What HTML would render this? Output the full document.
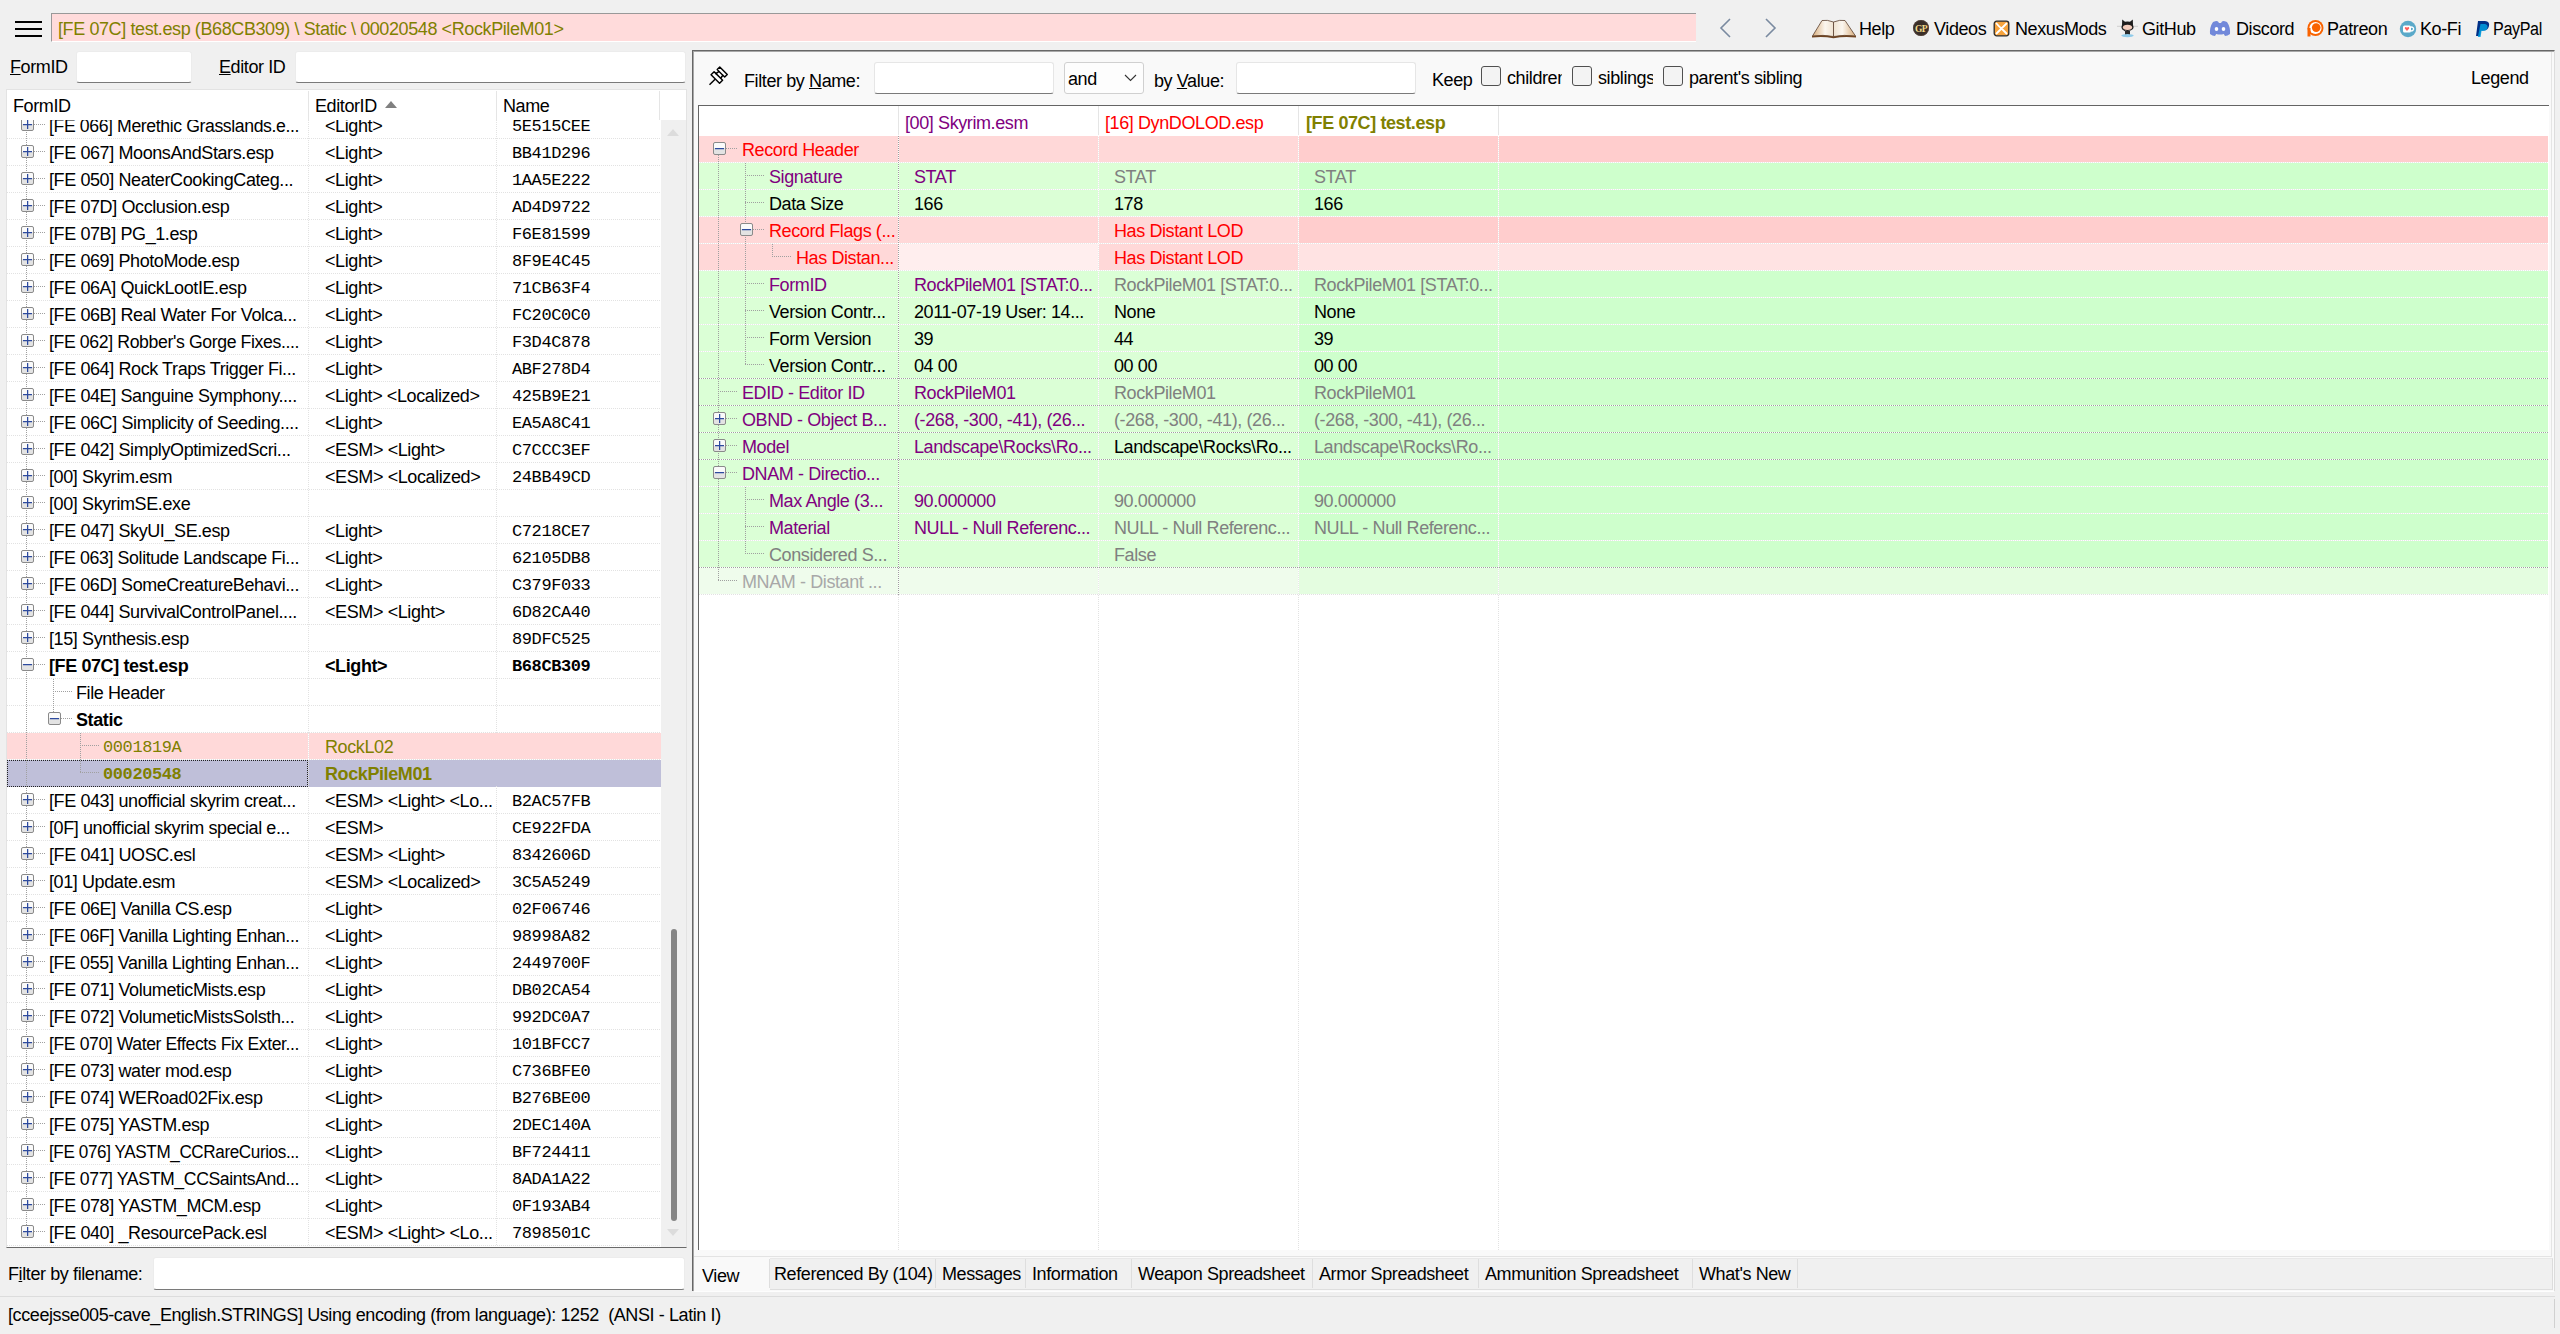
<!DOCTYPE html><html><head><meta charset="utf-8"><style>
*{box-sizing:border-box}
html,body{margin:0;padding:0}
body{width:2560px;height:1334px;overflow:hidden;background:#f0f0f0;position:relative;
 font-family:"Liberation Sans",sans-serif;font-size:18px;letter-spacing:-0.4px;color:#000}
.a{position:absolute;white-space:nowrap}
.t{position:absolute;white-space:nowrap;line-height:20px;height:20px}
.mono{font-family:"Liberation Mono",monospace;font-size:17px;letter-spacing:-0.4px}
.inp{position:absolute;background:#fff;border:1px solid #ececec;border-bottom:1px solid #7a7a7a;border-radius:3px}
.pb{position:absolute;width:13px;height:13px;border:1px solid #8a8a8a;border-radius:2px;
 background:linear-gradient(#fafafa 0,#fafafa 50%,#e3e3e3 50%,#e3e3e3 100%)}
.pb:before{content:"";position:absolute;left:1px;top:5px;width:9px;height:1px;background:#2d4a9e;box-shadow:0 1px 0 rgba(45,74,158,.25)}
.pb.p:after{content:"";position:absolute;left:5px;top:1px;width:1px;height:9px;background:#2d4a9e;box-shadow:1px 0 0 rgba(45,74,158,.25)}
.hd{position:absolute;height:1px;background-image:linear-gradient(90deg,#a0a0a0 50%,transparent 50%);background-size:2px 1px}
.vd{position:absolute;width:1px;background-image:linear-gradient(#a0a0a0 50%,transparent 50%);background-size:1px 2px}
.rs{position:absolute;height:1px;background:#e9e9e9 linear-gradient(90deg,#fff 50%,transparent 50%);background-size:2px 1px}
.ls{position:absolute;height:1px;background-image:linear-gradient(90deg,#e2e2e2 50%,transparent 50%);background-size:2px 1px}
.lv{position:absolute;width:1px;background-image:linear-gradient(#e2e2e2 50%,transparent 50%);background-size:1px 2px}
</style></head><body>
<div class="a" style="left:15px;top:21px;width:27px;height:2px;background:#000"></div>
<div class="a" style="left:15px;top:28px;width:27px;height:2px;background:#000"></div>
<div class="a" style="left:15px;top:35px;width:27px;height:2px;background:#000"></div>
<div class="a" style="left:51px;top:13px;width:1645px;height:29px;background:#ffdbdb;border-top:1px solid #999;border-left:1px solid #999;border-bottom:1px solid #fff"></div>
<div class="t" style="left:58px;top:19px;color:#808000">[FE 07C] test.esp (B68CB309) \ Static \ 00020548 &lt;RockPileM01&gt;</div>
<svg class="a" style="left:1716px;top:17px" width="66" height="22" viewBox="0 0 66 22"><path d="M14 2 L5 11 L14 20" fill="none" stroke="#7a8aa0" stroke-width="1.6"/><path d="M50 2 L59 11 L50 20" fill="none" stroke="#7a8aa0" stroke-width="1.6"/></svg>
<svg class="a" style="left:1811px;top:18px" width="46" height="22" viewBox="0 0 46 22">
<defs><linearGradient id="pgl" x1="0" x2="1" y1="0" y2="0"><stop offset="0" stop-color="#d9ae7c"/><stop offset="0.6" stop-color="#fbf6ef"/><stop offset="1" stop-color="#efe2d0"/></linearGradient>
<linearGradient id="pgr" x1="1" x2="0" y1="0" y2="0"><stop offset="0" stop-color="#d9ae7c"/><stop offset="0.6" stop-color="#fbf6ef"/><stop offset="1" stop-color="#efe2d0"/></linearGradient></defs>
<path d="M22.5 4 Q16 1.5 11 2.5 L1.5 18 Q12 16.5 22.5 18.5Z" fill="url(#pgl)" stroke="#5a4030" stroke-width="0.8"/>
<path d="M22.5 4 Q29 1.5 34 2.5 L44.5 18 Q33 16.5 22.5 18.5Z" fill="url(#pgr)" stroke="#5a4030" stroke-width="0.8"/>
<path d="M1 18 Q12 16.5 22.5 18.5 Q33 16.5 45 18 L45 19.6 Q33 18.2 22.5 20.3 Q12 18.2 1 19.6Z" fill="#6e4422"/></svg>
<div class="t" style="left:1859px;top:19px;">Help</div>
<svg class="a" style="left:1912px;top:19px" width="18" height="18" viewBox="0 0 18 18"><circle cx="9" cy="9" r="8" fill="#3a2e28"/><circle cx="9" cy="9" r="7.6" fill="none" stroke="#5a4a40" stroke-width="0.6"/><text x="9" y="12.6" font-size="9.5" font-weight="bold" text-anchor="middle" fill="#f2dc8a" font-family="Liberation Serif" letter-spacing="-0.6">GP</text></svg>
<div class="t" style="left:1934px;top:19px;">Videos</div>
<svg class="a" style="left:1993px;top:20px" width="17" height="17" viewBox="0 0 17 17"><rect x="1.2" y="1.2" width="14.6" height="14.6" rx="2.5" fill="#f7a33c" stroke="#2a2a2a" stroke-width="1.3"/><path d="M3.5 3.5 Q6 6.5 8.5 8.5 M13.5 3.5 Q11 6 8.5 8.5 M3.5 13.5 Q6 11 8.5 8.5 M13.5 13.5 Q11 11 8.5 8.5" stroke="#fff" stroke-width="1.8" fill="none" stroke-linecap="round"/></svg>
<div class="t" style="left:2015px;top:19px;">NexusMods</div>
<svg class="a" style="left:2116px;top:18px" width="24" height="20" viewBox="0 0 24 20"><path d="M6 7 L6.2 1.5 L9 3.8 Q11.5 3 14 3.8 L16.8 1.5 L17 7 Q18.3 9 17 11 Q15 13 11.5 13 Q8 13 6 11 Q4.7 9 6 7Z" fill="#1e1e1e"/><ellipse cx="11.5" cy="9.3" rx="4.6" ry="2.6" fill="#f4cdbd"/><path d="M1 8.3 L5 8.3 M18 8.3 L22 8.3" stroke="#bbb" stroke-width="0.6"/><rect x="9" y="13" width="5" height="4" fill="#2a2a2a"/><path d="M9 13 L6 10.5" stroke="#2a2a2a" stroke-width="1"/><ellipse cx="11.5" cy="17.6" rx="6.2" ry="1.6" fill="#8fcbea"/></svg>
<div class="t" style="left:2142px;top:19px;">GitHub</div>
<svg class="a" style="left:2209px;top:20px" width="22" height="16" viewBox="0 0 22 16"><path d="M4 2 Q8 0.5 9 1.5 L10 3 Q11 2.8 12 3 L13 1.5 Q14 0.5 18 2 Q21.5 7 21 14 Q18.5 16 16 16 L14.8 14 Q11 15 7.2 14 L6 16 Q3.5 16 1 14 Q0.5 7 4 2Z" fill="#7289da"/><ellipse cx="7.5" cy="9" rx="1.8" ry="2" fill="#fff"/><ellipse cx="14.5" cy="9" rx="1.8" ry="2" fill="#fff"/></svg>
<div class="t" style="left:2236px;top:19px;">Discord</div>
<svg class="a" style="left:2306px;top:19px" width="19" height="19" viewBox="0 0 19 19"><circle cx="9.5" cy="9" r="8" fill="#f96300"/><circle cx="9.5" cy="9" r="6.1" fill="#fff"/><rect x="1.5" y="9" width="3" height="8.5" fill="#f96300"/><circle cx="10.2" cy="8.6" r="4.3" fill="#f96300"/></svg>
<div class="t" style="left:2327px;top:19px;">Patreon</div>
<svg class="a" style="left:2399px;top:20px" width="18" height="18" viewBox="0 0 18 18"><circle cx="9" cy="9" r="8.2" fill="#5aa9c9"/><rect x="4" y="5.5" width="8" height="7" rx="1.5" fill="#fff"/><path d="M12 7 Q15 7 14.5 9.5 Q14 11 12 11" fill="none" stroke="#fff" stroke-width="1.4"/><path d="M8 11 L5.8 8.5 Q5.5 6.8 7 7 Q8 7.3 8 8 Q8 7.3 9 7 Q10.5 6.8 10.2 8.5Z" fill="#ff5e5b"/></svg>
<div class="t" style="left:2420px;top:19px;">Ko-Fi</div>
<svg class="a" style="left:2475px;top:20px" width="16" height="18" viewBox="0 0 16 18"><path d="M3 1 L10 1 Q15 1.5 14 6 Q13 10.5 8 10.5 L6 10.5 L5 16 L1 16Z" fill="#003087"/><path d="M5.5 4 L10 4 Q13 4.5 12.5 7.5 Q12 11 7.5 11 L6.5 11 L5.6 17 L2.8 17Z" fill="#009cde" opacity="0.85"/></svg>
<div class="t" style="left:2493px;top:19px;transform-origin:0 0;transform:scaleX(0.895)">PayPal</div>
<div class="t" style="left:10px;top:57px;"><u>F</u>ormID</div>
<div class="inp" style="left:76px;top:51px;width:116px;height:32px"></div>
<div class="t" style="left:219px;top:57px;"><u>E</u>ditor ID</div>
<div class="inp" style="left:295px;top:51px;width:391px;height:32px"></div>
<div class="a" style="left:6px;top:89px;width:681px;height:1159px;background:#fff;border:1px solid #e3e3e3;border-bottom:1px solid #6a6a6a"></div>
<div class="a" style="left:7px;top:120px;width:654px;height:1126px;overflow:hidden">
<div class="ls" style="left:0;top:18px;width:654px"></div>
<div class="ls" style="left:0;top:45px;width:654px"></div>
<div class="ls" style="left:0;top:72px;width:654px"></div>
<div class="ls" style="left:0;top:99px;width:654px"></div>
<div class="ls" style="left:0;top:126px;width:654px"></div>
<div class="ls" style="left:0;top:153px;width:654px"></div>
<div class="ls" style="left:0;top:180px;width:654px"></div>
<div class="ls" style="left:0;top:207px;width:654px"></div>
<div class="ls" style="left:0;top:234px;width:654px"></div>
<div class="ls" style="left:0;top:261px;width:654px"></div>
<div class="ls" style="left:0;top:288px;width:654px"></div>
<div class="ls" style="left:0;top:315px;width:654px"></div>
<div class="ls" style="left:0;top:342px;width:654px"></div>
<div class="ls" style="left:0;top:369px;width:654px"></div>
<div class="ls" style="left:0;top:396px;width:654px"></div>
<div class="ls" style="left:0;top:423px;width:654px"></div>
<div class="ls" style="left:0;top:450px;width:654px"></div>
<div class="ls" style="left:0;top:477px;width:654px"></div>
<div class="ls" style="left:0;top:504px;width:654px"></div>
<div class="ls" style="left:0;top:531px;width:654px"></div>
<div class="ls" style="left:0;top:558px;width:654px"></div>
<div class="ls" style="left:0;top:585px;width:654px"></div>
<div class="ls" style="left:0;top:612px;width:654px"></div>
<div class="a" style="left:0;top:613px;width:654px;height:26px;background:#ffd9d9"></div>
<div class="ls" style="left:0;top:639px;width:654px"></div>
<div class="a" style="left:0;top:640px;width:654px;height:27px;background:#bfbfd9"></div>
<div class="a" style="left:0;top:640px;width:301px;height:27px;border:1px dotted #222"></div>
<div class="ls" style="left:0;top:693px;width:654px"></div>
<div class="ls" style="left:0;top:720px;width:654px"></div>
<div class="ls" style="left:0;top:747px;width:654px"></div>
<div class="ls" style="left:0;top:774px;width:654px"></div>
<div class="ls" style="left:0;top:801px;width:654px"></div>
<div class="ls" style="left:0;top:828px;width:654px"></div>
<div class="ls" style="left:0;top:855px;width:654px"></div>
<div class="ls" style="left:0;top:882px;width:654px"></div>
<div class="ls" style="left:0;top:909px;width:654px"></div>
<div class="ls" style="left:0;top:936px;width:654px"></div>
<div class="ls" style="left:0;top:963px;width:654px"></div>
<div class="ls" style="left:0;top:990px;width:654px"></div>
<div class="ls" style="left:0;top:1017px;width:654px"></div>
<div class="ls" style="left:0;top:1044px;width:654px"></div>
<div class="ls" style="left:0;top:1071px;width:654px"></div>
<div class="ls" style="left:0;top:1098px;width:654px"></div>
<div class="ls" style="left:0;top:1125px;width:654px"></div>
<div class="lv" style="left:301px;top:0;height:1127px"></div>
<div class="lv" style="left:489px;top:0;height:613px"></div>
<div class="lv" style="left:489px;top:666px;height:600px"></div>
<div class="a" style="left:301px;top:613px;width:1px;height:26px;background:#fff linear-gradient(#e8e8e8 50%,transparent 50%);background-size:1px 2px"></div>
<div class="vd" style="left:19px;top:0;height:1105px"></div>
<div class="vd" style="left:46px;top:559px;height:33px"></div>
<div class="vd" style="left:73px;top:613px;height:40px"></div>
<div class="pb p" style="left:14px;top:-2px"></div>
<div class="hd" style="left:27px;top:4px;width:11px"></div>
<div class="t" style="left:42px;top:-4px;transform-origin:0 0;transform:scaleX(0.9807);">[FE 066] Merethic Grasslands.e...</div>
<div class="t" style="left:318px;top:-4px;">&lt;Light&gt;</div>
<div class="t mono" style="left:505px;top:-3px;">5E515CEE</div>
<div class="pb p" style="left:14px;top:25px"></div>
<div class="hd" style="left:27px;top:31px;width:11px"></div>
<div class="t" style="left:42px;top:23px;">[FE 067] MoonsAndStars.esp</div>
<div class="t" style="left:318px;top:23px;">&lt;Light&gt;</div>
<div class="t mono" style="left:505px;top:24px;">BB41D296</div>
<div class="pb p" style="left:14px;top:52px"></div>
<div class="hd" style="left:27px;top:58px;width:11px"></div>
<div class="t" style="left:42px;top:50px;">[FE 050] NeaterCookingCateg...</div>
<div class="t" style="left:318px;top:50px;">&lt;Light&gt;</div>
<div class="t mono" style="left:505px;top:51px;">1AA5E222</div>
<div class="pb p" style="left:14px;top:79px"></div>
<div class="hd" style="left:27px;top:85px;width:11px"></div>
<div class="t" style="left:42px;top:77px;">[FE 07D] Occlusion.esp</div>
<div class="t" style="left:318px;top:77px;">&lt;Light&gt;</div>
<div class="t mono" style="left:505px;top:78px;">AD4D9722</div>
<div class="pb p" style="left:14px;top:106px"></div>
<div class="hd" style="left:27px;top:112px;width:11px"></div>
<div class="t" style="left:42px;top:104px;">[FE 07B] PG_1.esp</div>
<div class="t" style="left:318px;top:104px;">&lt;Light&gt;</div>
<div class="t mono" style="left:505px;top:105px;">F6E81599</div>
<div class="pb p" style="left:14px;top:133px"></div>
<div class="hd" style="left:27px;top:139px;width:11px"></div>
<div class="t" style="left:42px;top:131px;">[FE 069] PhotoMode.esp</div>
<div class="t" style="left:318px;top:131px;">&lt;Light&gt;</div>
<div class="t mono" style="left:505px;top:132px;">8F9E4C45</div>
<div class="pb p" style="left:14px;top:160px"></div>
<div class="hd" style="left:27px;top:166px;width:11px"></div>
<div class="t" style="left:42px;top:158px;">[FE 06A] QuickLootIE.esp</div>
<div class="t" style="left:318px;top:158px;">&lt;Light&gt;</div>
<div class="t mono" style="left:505px;top:159px;">71CB63F4</div>
<div class="pb p" style="left:14px;top:187px"></div>
<div class="hd" style="left:27px;top:193px;width:11px"></div>
<div class="t" style="left:42px;top:185px;">[FE 06B] Real Water For Volca...</div>
<div class="t" style="left:318px;top:185px;">&lt;Light&gt;</div>
<div class="t mono" style="left:505px;top:186px;">FC20C0C0</div>
<div class="pb p" style="left:14px;top:214px"></div>
<div class="hd" style="left:27px;top:220px;width:11px"></div>
<div class="t" style="left:42px;top:212px;transform-origin:0 0;transform:scaleX(0.9829);">[FE 062] Robber&#x27;s Gorge Fixes....</div>
<div class="t" style="left:318px;top:212px;">&lt;Light&gt;</div>
<div class="t mono" style="left:505px;top:213px;">F3D4C878</div>
<div class="pb p" style="left:14px;top:241px"></div>
<div class="hd" style="left:27px;top:247px;width:11px"></div>
<div class="t" style="left:42px;top:239px;">[FE 064] Rock Traps Trigger Fi...</div>
<div class="t" style="left:318px;top:239px;">&lt;Light&gt;</div>
<div class="t mono" style="left:505px;top:240px;">ABF278D4</div>
<div class="pb p" style="left:14px;top:268px"></div>
<div class="hd" style="left:27px;top:274px;width:11px"></div>
<div class="t" style="left:42px;top:266px;">[FE 04E] Sanguine Symphony....</div>
<div class="t" style="left:318px;top:266px;">&lt;Light&gt; &lt;Localized&gt;</div>
<div class="t mono" style="left:505px;top:267px;">425B9E21</div>
<div class="pb p" style="left:14px;top:295px"></div>
<div class="hd" style="left:27px;top:301px;width:11px"></div>
<div class="t" style="left:42px;top:293px;">[FE 06C] Simplicity of Seeding....</div>
<div class="t" style="left:318px;top:293px;">&lt;Light&gt;</div>
<div class="t mono" style="left:505px;top:294px;">EA5A8C41</div>
<div class="pb p" style="left:14px;top:322px"></div>
<div class="hd" style="left:27px;top:328px;width:11px"></div>
<div class="t" style="left:42px;top:320px;">[FE 042] SimplyOptimizedScri...</div>
<div class="t" style="left:318px;top:320px;">&lt;ESM&gt; &lt;Light&gt;</div>
<div class="t mono" style="left:505px;top:321px;">C7CCC3EF</div>
<div class="pb p" style="left:14px;top:349px"></div>
<div class="hd" style="left:27px;top:355px;width:11px"></div>
<div class="t" style="left:42px;top:347px;">[00] Skyrim.esm</div>
<div class="t" style="left:318px;top:347px;">&lt;ESM&gt; &lt;Localized&gt;</div>
<div class="t mono" style="left:505px;top:348px;">24BB49CD</div>
<div class="pb p" style="left:14px;top:376px"></div>
<div class="hd" style="left:27px;top:382px;width:11px"></div>
<div class="t" style="left:42px;top:374px;">[00] SkyrimSE.exe</div>
<div class="t" style="left:318px;top:374px;"></div>
<div class="t mono" style="left:505px;top:375px;"></div>
<div class="pb p" style="left:14px;top:403px"></div>
<div class="hd" style="left:27px;top:409px;width:11px"></div>
<div class="t" style="left:42px;top:401px;">[FE 047] SkyUI_SE.esp</div>
<div class="t" style="left:318px;top:401px;">&lt;Light&gt;</div>
<div class="t mono" style="left:505px;top:402px;">C7218CE7</div>
<div class="pb p" style="left:14px;top:430px"></div>
<div class="hd" style="left:27px;top:436px;width:11px"></div>
<div class="t" style="left:42px;top:428px;transform-origin:0 0;transform:scaleX(0.9883);">[FE 063] Solitude Landscape Fi...</div>
<div class="t" style="left:318px;top:428px;">&lt;Light&gt;</div>
<div class="t mono" style="left:505px;top:429px;">62105DB8</div>
<div class="pb p" style="left:14px;top:457px"></div>
<div class="hd" style="left:27px;top:463px;width:11px"></div>
<div class="t" style="left:42px;top:455px;transform-origin:0 0;transform:scaleX(0.9955);">[FE 06D] SomeCreatureBehavi...</div>
<div class="t" style="left:318px;top:455px;">&lt;Light&gt;</div>
<div class="t mono" style="left:505px;top:456px;">C379F033</div>
<div class="pb p" style="left:14px;top:484px"></div>
<div class="hd" style="left:27px;top:490px;width:11px"></div>
<div class="t" style="left:42px;top:482px;">[FE 044] SurvivalControlPanel....</div>
<div class="t" style="left:318px;top:482px;">&lt;ESM&gt; &lt;Light&gt;</div>
<div class="t mono" style="left:505px;top:483px;">6D82CA40</div>
<div class="pb p" style="left:14px;top:511px"></div>
<div class="hd" style="left:27px;top:517px;width:11px"></div>
<div class="t" style="left:42px;top:509px;">[15] Synthesis.esp</div>
<div class="t" style="left:318px;top:509px;"></div>
<div class="t mono" style="left:505px;top:510px;">89DFC525</div>
<div class="pb " style="left:14px;top:538px"></div>
<div class="hd" style="left:27px;top:544px;width:11px"></div>
<div class="t" style="left:42px;top:536px;font-weight:bold;">[FE 07C] test.esp</div>
<div class="t" style="left:318px;top:536px;font-weight:bold;">&lt;Light&gt;</div>
<div class="t mono" style="left:505px;top:537px;font-weight:bold;">B68CB309</div>
<div class="hd" style="left:46px;top:571px;width:20px"></div>
<div class="t" style="left:69px;top:563px;">File Header</div>
<div class="pb" style="left:41px;top:592px"></div>
<div class="hd" style="left:54px;top:598px;width:11px"></div>
<div class="t" style="left:69px;top:590px;font-weight:bold">Static</div>
<div class="hd" style="left:73px;top:625px;width:20px"></div>
<div class="t mono" style="left:96px;top:618px;color:#808000;">0001819A</div>
<div class="t" style="left:318px;top:617px;color:#808000;">RockL02</div>
<div class="hd" style="left:73px;top:652px;width:20px"></div>
<div class="t mono" style="left:96px;top:645px;color:#808000;font-weight:bold;">00020548</div>
<div class="t" style="left:318px;top:644px;color:#808000;font-weight:bold;">RockPileM01</div>
<div class="pb p" style="left:14px;top:673px"></div>
<div class="hd" style="left:27px;top:679px;width:11px"></div>
<div class="t" style="left:42px;top:671px;">[FE 043] unofficial skyrim creat...</div>
<div class="t" style="left:318px;top:671px;">&lt;ESM&gt; &lt;Light&gt; &lt;Lo...</div>
<div class="t mono" style="left:505px;top:672px;">B2AC57FB</div>
<div class="pb p" style="left:14px;top:700px"></div>
<div class="hd" style="left:27px;top:706px;width:11px"></div>
<div class="t" style="left:42px;top:698px;">[0F] unofficial skyrim special e...</div>
<div class="t" style="left:318px;top:698px;">&lt;ESM&gt;</div>
<div class="t mono" style="left:505px;top:699px;">CE922FDA</div>
<div class="pb p" style="left:14px;top:727px"></div>
<div class="hd" style="left:27px;top:733px;width:11px"></div>
<div class="t" style="left:42px;top:725px;">[FE 041] UOSC.esl</div>
<div class="t" style="left:318px;top:725px;">&lt;ESM&gt; &lt;Light&gt;</div>
<div class="t mono" style="left:505px;top:726px;">8342606D</div>
<div class="pb p" style="left:14px;top:754px"></div>
<div class="hd" style="left:27px;top:760px;width:11px"></div>
<div class="t" style="left:42px;top:752px;">[01] Update.esm</div>
<div class="t" style="left:318px;top:752px;">&lt;ESM&gt; &lt;Localized&gt;</div>
<div class="t mono" style="left:505px;top:753px;">3C5A5249</div>
<div class="pb p" style="left:14px;top:781px"></div>
<div class="hd" style="left:27px;top:787px;width:11px"></div>
<div class="t" style="left:42px;top:779px;">[FE 06E] Vanilla CS.esp</div>
<div class="t" style="left:318px;top:779px;">&lt;Light&gt;</div>
<div class="t mono" style="left:505px;top:780px;">02F06746</div>
<div class="pb p" style="left:14px;top:808px"></div>
<div class="hd" style="left:27px;top:814px;width:11px"></div>
<div class="t" style="left:42px;top:806px;transform-origin:0 0;transform:scaleX(0.9872);">[FE 06F] Vanilla Lighting Enhan...</div>
<div class="t" style="left:318px;top:806px;">&lt;Light&gt;</div>
<div class="t mono" style="left:505px;top:807px;">98998A82</div>
<div class="pb p" style="left:14px;top:835px"></div>
<div class="hd" style="left:27px;top:841px;width:11px"></div>
<div class="t" style="left:42px;top:833px;transform-origin:0 0;transform:scaleX(0.9911);">[FE 055] Vanilla Lighting Enhan...</div>
<div class="t" style="left:318px;top:833px;">&lt;Light&gt;</div>
<div class="t mono" style="left:505px;top:834px;">2449700F</div>
<div class="pb p" style="left:14px;top:862px"></div>
<div class="hd" style="left:27px;top:868px;width:11px"></div>
<div class="t" style="left:42px;top:860px;">[FE 071] VolumeticMists.esp</div>
<div class="t" style="left:318px;top:860px;">&lt;Light&gt;</div>
<div class="t mono" style="left:505px;top:861px;">DB02CA54</div>
<div class="pb p" style="left:14px;top:889px"></div>
<div class="hd" style="left:27px;top:895px;width:11px"></div>
<div class="t" style="left:42px;top:887px;">[FE 072] VolumeticMistsSolsth...</div>
<div class="t" style="left:318px;top:887px;">&lt;Light&gt;</div>
<div class="t mono" style="left:505px;top:888px;">992DC0A7</div>
<div class="pb p" style="left:14px;top:916px"></div>
<div class="hd" style="left:27px;top:922px;width:11px"></div>
<div class="t" style="left:42px;top:914px;transform-origin:0 0;transform:scaleX(0.9762);">[FE 070] Water Effects Fix Exter...</div>
<div class="t" style="left:318px;top:914px;">&lt;Light&gt;</div>
<div class="t mono" style="left:505px;top:915px;">101BFCC7</div>
<div class="pb p" style="left:14px;top:943px"></div>
<div class="hd" style="left:27px;top:949px;width:11px"></div>
<div class="t" style="left:42px;top:941px;">[FE 073] water mod.esp</div>
<div class="t" style="left:318px;top:941px;">&lt;Light&gt;</div>
<div class="t mono" style="left:505px;top:942px;">C736BFE0</div>
<div class="pb p" style="left:14px;top:970px"></div>
<div class="hd" style="left:27px;top:976px;width:11px"></div>
<div class="t" style="left:42px;top:968px;">[FE 074] WERoad02Fix.esp</div>
<div class="t" style="left:318px;top:968px;">&lt;Light&gt;</div>
<div class="t mono" style="left:505px;top:969px;">B276BE00</div>
<div class="pb p" style="left:14px;top:997px"></div>
<div class="hd" style="left:27px;top:1003px;width:11px"></div>
<div class="t" style="left:42px;top:995px;">[FE 075] YASTM.esp</div>
<div class="t" style="left:318px;top:995px;">&lt;Light&gt;</div>
<div class="t mono" style="left:505px;top:996px;">2DEC140A</div>
<div class="pb p" style="left:14px;top:1024px"></div>
<div class="hd" style="left:27px;top:1030px;width:11px"></div>
<div class="t" style="left:42px;top:1022px;transform-origin:0 0;transform:scaleX(0.9490);">[FE 076] YASTM_CCRareCurios...</div>
<div class="t" style="left:318px;top:1022px;">&lt;Light&gt;</div>
<div class="t mono" style="left:505px;top:1023px;">BF724411</div>
<div class="pb p" style="left:14px;top:1051px"></div>
<div class="hd" style="left:27px;top:1057px;width:11px"></div>
<div class="t" style="left:42px;top:1049px;transform-origin:0 0;transform:scaleX(0.9809);">[FE 077] YASTM_CCSaintsAnd...</div>
<div class="t" style="left:318px;top:1049px;">&lt;Light&gt;</div>
<div class="t mono" style="left:505px;top:1050px;">8ADA1A22</div>
<div class="pb p" style="left:14px;top:1078px"></div>
<div class="hd" style="left:27px;top:1084px;width:11px"></div>
<div class="t" style="left:42px;top:1076px;">[FE 078] YASTM_MCM.esp</div>
<div class="t" style="left:318px;top:1076px;">&lt;Light&gt;</div>
<div class="t mono" style="left:505px;top:1077px;">0F193AB4</div>
<div class="pb p" style="left:14px;top:1105px"></div>
<div class="hd" style="left:27px;top:1111px;width:11px"></div>
<div class="t" style="left:42px;top:1103px;">[FE 040] _ResourcePack.esl</div>
<div class="t" style="left:318px;top:1103px;">&lt;ESM&gt; &lt;Light&gt; &lt;Lo...</div>
<div class="t mono" style="left:505px;top:1104px;">7898501C</div>
</div>
<div class="a" style="left:7px;top:90px;width:654px;height:30px;background:#fff"></div>
<div class="t" style="left:13px;top:96px;">FormID</div>
<div class="t" style="left:315px;top:96px;">EditorID</div>
<svg class="a" style="left:384px;top:100px" width="14" height="9" viewBox="0 0 14 9"><path d="M1 8 L7 1 L13 8Z" fill="#808080"/></svg>
<div class="t" style="left:503px;top:96px;">Name</div>
<div class="a" style="left:308px;top:91px;width:1px;height:29px;background:#e5e5e5"></div>
<div class="a" style="left:496px;top:91px;width:1px;height:29px;background:#e5e5e5"></div>
<div class="a" style="left:659px;top:91px;width:1px;height:29px;background:#e5e5e5"></div>
<div class="a" style="left:661px;top:120px;width:25px;height:1127px;background:#f0f0f0"></div>
<svg class="a" style="left:665px;top:127px" width="16" height="10" viewBox="0 0 16 10"><path d="M2 9 L8 2 L14 9Z" fill="#dcdcdc"/></svg>
<svg class="a" style="left:665px;top:1228px" width="16" height="10" viewBox="0 0 16 10"><path d="M2 1 L8 8 L14 1Z" fill="#dcdcdc"/></svg>
<div class="a" style="left:671px;top:929px;width:6px;height:292px;background:#858585;border-radius:3px"></div>
<div class="t" style="left:8px;top:1264px;">F<u>i</u>lter by filename:</div>
<div class="inp" style="left:153px;top:1257px;width:532px;height:33px"></div>
<div class="a" style="left:0;top:1296px;width:2555px;height:1px;background:#dcdcdc"></div>
<div class="a" style="left:2554px;top:1299px;width:1px;height:29px;background:#d0d0d0"></div>
<div class="t" style="left:8px;top:1305px;white-space:pre">[cceejsse005-cave_English.STRINGS] Using encoding (from language): 1252  (ANSI - Latin I)</div>
<div class="a" style="left:692px;top:50px;width:1863px;height:1241px;background:#f9f9f9;border-left:1px solid #676767;border-top:1px solid #676767;border-right:1px solid #dcdcdc;box-shadow:inset 1px 1px 0 #a8a8a8"></div>
<svg class="a" style="left:704px;top:62px" width="30" height="30" viewBox="0 0 30 30"><g transform="translate(11.3 17) rotate(45)" stroke="#000" stroke-width="1.45" fill="#fff" stroke-linejoin="round"><path d="M0 0.3 L0 8.2" /><path d="M-6 0 L6 0 L6 -4.3 L3.3 -4.3 L2.7 -8 L5.3 -8 L5.3 -11.6 L-5.3 -11.6 L-5.3 -8 L-2.7 -8 L-3.3 -4.3 L-6 -4.3Z"/><path d="M-3.3 -4.3 L3.3 -4.3 M-2.7 -8 L2.7 -8" fill="none"/></g></svg>
<div class="t" style="left:744px;top:71px;">Filter by <u>N</u>ame:</div>
<div class="inp" style="left:874px;top:62px;width:180px;height:32px;border:1px solid #e6e6e6;border-bottom:1px solid #7a7a7a;border-radius:3px"></div>
<div class="a" style="left:1064px;top:62px;width:80px;height:32px;background:#fdfdfd;border:1px solid #d0d0d0;border-radius:3px"></div>
<div class="t" style="left:1068px;top:69px;">and</div>
<svg class="a" style="left:1123px;top:73px" width="15" height="10" viewBox="0 0 15 10"><path d="M2 2 L7.5 7.5 L13 2" fill="none" stroke="#333" stroke-width="1.1"/></svg>
<div class="t" style="left:1154px;top:71px;">by <u>V</u>alue:</div>
<div class="inp" style="left:1236px;top:62px;width:180px;height:32px;border:1px solid #e6e6e6;border-bottom:1px solid #7a7a7a;border-radius:3px"></div>
<div class="t" style="left:1432px;top:70px;">Keep</div>
<div class="a" style="left:1481px;top:66px;width:20px;height:20px;border:1px solid #505050;border-radius:3px;background:#f3f3f3"></div>
<div class="t" style="left:1507px;top:68px;width:55px;overflow:hidden">children</div>
<div class="a" style="left:1572px;top:66px;width:20px;height:20px;border:1px solid #505050;border-radius:3px;background:#f3f3f3"></div>
<div class="t" style="left:1598px;top:68px;width:55px;overflow:hidden">siblings</div>
<div class="a" style="left:1663px;top:66px;width:20px;height:20px;border:1px solid #505050;border-radius:3px;background:#f3f3f3"></div>
<div class="t" style="left:1689px;top:68px;width:200px;overflow:hidden">parent&#x27;s sibling</div>
<div class="t" style="left:2471px;top:68px;">Legend</div>
<div class="a" style="left:2551px;top:52px;width:1px;height:1205px;background:#e4e4e4"></div>
<div class="a" style="left:698px;top:105px;width:1851px;height:1145px;background:#fff;border-left:1px solid #646464;border-top:1px solid #646464"></div>
<div class="t" style="left:905px;top:113px;color:#800080">[00] Skyrim.esm</div>
<div class="t" style="left:1105px;top:113px;color:#ff0000">[16] DynDOLOD.esp</div>
<div class="t" style="left:1306px;top:113px;color:#808000;font-weight:bold">[FE 07C] test.esp</div>
<div class="a" style="left:898px;top:106px;width:1px;height:29px;background:#e5e5e5"></div>
<div class="a" style="left:1098px;top:106px;width:1px;height:29px;background:#e5e5e5"></div>
<div class="a" style="left:1298px;top:106px;width:1px;height:29px;background:#e5e5e5"></div>
<div class="a" style="left:1498px;top:106px;width:1px;height:29px;background:#e5e5e5"></div>
<div class="a" style="left:699px;top:136px;width:199px;height:26px;background:#ffd8d8"></div>
<div class="a" style="left:899px;top:136px;width:199px;height:26px;background:#ffd8d8"></div>
<div class="a" style="left:1099px;top:136px;width:199px;height:26px;background:#ffd8d8"></div>
<div class="a" style="left:1299px;top:136px;width:199px;height:26px;background:#ffcdcd"></div>
<div class="a" style="left:1499px;top:136px;width:1049px;height:26px;background:#ffcdcd"></div>
<div class="rs" style="left:699px;top:162px;width:1849px"></div>
<div class="a" style="left:699px;top:163px;width:199px;height:26px;background:#dbffd6"></div>
<div class="a" style="left:899px;top:163px;width:199px;height:26px;background:#dbffd6"></div>
<div class="a" style="left:1099px;top:163px;width:199px;height:26px;background:#dbffd6"></div>
<div class="a" style="left:1299px;top:163px;width:199px;height:26px;background:#ceffcc"></div>
<div class="a" style="left:1499px;top:163px;width:1049px;height:26px;background:#ceffcc"></div>
<div class="rs" style="left:699px;top:189px;width:1849px"></div>
<div class="a" style="left:699px;top:190px;width:199px;height:26px;background:#dbffd6"></div>
<div class="a" style="left:899px;top:190px;width:199px;height:26px;background:#dbffd6"></div>
<div class="a" style="left:1099px;top:190px;width:199px;height:26px;background:#dbffd6"></div>
<div class="a" style="left:1299px;top:190px;width:199px;height:26px;background:#ceffcc"></div>
<div class="a" style="left:1499px;top:190px;width:1049px;height:26px;background:#ceffcc"></div>
<div class="rs" style="left:699px;top:216px;width:1849px"></div>
<div class="a" style="left:699px;top:217px;width:199px;height:26px;background:#ffd8d8"></div>
<div class="a" style="left:899px;top:217px;width:199px;height:26px;background:#ffd8d8"></div>
<div class="a" style="left:1099px;top:217px;width:199px;height:26px;background:#ffd8d8"></div>
<div class="a" style="left:1299px;top:217px;width:199px;height:26px;background:#ffcdcd"></div>
<div class="a" style="left:1499px;top:217px;width:1049px;height:26px;background:#ffcdcd"></div>
<div class="rs" style="left:699px;top:243px;width:1849px"></div>
<div class="a" style="left:699px;top:244px;width:199px;height:26px;background:#ffd8d8"></div>
<div class="a" style="left:899px;top:244px;width:199px;height:26px;background:#ffeeee"></div>
<div class="a" style="left:1099px;top:244px;width:199px;height:26px;background:#ffd8d8"></div>
<div class="a" style="left:1299px;top:244px;width:199px;height:26px;background:#ffe3e3"></div>
<div class="a" style="left:1499px;top:244px;width:1049px;height:26px;background:#ffe3e3"></div>
<div class="rs" style="left:699px;top:270px;width:1849px"></div>
<div class="a" style="left:699px;top:271px;width:199px;height:26px;background:#dbffd6"></div>
<div class="a" style="left:899px;top:271px;width:199px;height:26px;background:#dbffd6"></div>
<div class="a" style="left:1099px;top:271px;width:199px;height:26px;background:#dbffd6"></div>
<div class="a" style="left:1299px;top:271px;width:199px;height:26px;background:#ceffcc"></div>
<div class="a" style="left:1499px;top:271px;width:1049px;height:26px;background:#ceffcc"></div>
<div class="rs" style="left:699px;top:297px;width:1849px"></div>
<div class="a" style="left:699px;top:298px;width:199px;height:26px;background:#dbffd6"></div>
<div class="a" style="left:899px;top:298px;width:199px;height:26px;background:#dbffd6"></div>
<div class="a" style="left:1099px;top:298px;width:199px;height:26px;background:#dbffd6"></div>
<div class="a" style="left:1299px;top:298px;width:199px;height:26px;background:#ceffcc"></div>
<div class="a" style="left:1499px;top:298px;width:1049px;height:26px;background:#ceffcc"></div>
<div class="rs" style="left:699px;top:324px;width:1849px"></div>
<div class="a" style="left:699px;top:325px;width:199px;height:26px;background:#dbffd6"></div>
<div class="a" style="left:899px;top:325px;width:199px;height:26px;background:#dbffd6"></div>
<div class="a" style="left:1099px;top:325px;width:199px;height:26px;background:#dbffd6"></div>
<div class="a" style="left:1299px;top:325px;width:199px;height:26px;background:#ceffcc"></div>
<div class="a" style="left:1499px;top:325px;width:1049px;height:26px;background:#ceffcc"></div>
<div class="rs" style="left:699px;top:351px;width:1849px"></div>
<div class="a" style="left:699px;top:352px;width:199px;height:26px;background:#dbffd6"></div>
<div class="a" style="left:899px;top:352px;width:199px;height:26px;background:#dbffd6"></div>
<div class="a" style="left:1099px;top:352px;width:199px;height:26px;background:#dbffd6"></div>
<div class="a" style="left:1299px;top:352px;width:199px;height:26px;background:#ceffcc"></div>
<div class="a" style="left:1499px;top:352px;width:1049px;height:26px;background:#ceffcc"></div>
<div class="a" style="left:699px;top:378px;width:1849px;height:1px;background:#fff linear-gradient(90deg,#a0a0a0 50%,transparent 50%);background-size:2px 1px"></div>
<div class="a" style="left:699px;top:379px;width:199px;height:26px;background:#dbffd6"></div>
<div class="a" style="left:899px;top:379px;width:199px;height:26px;background:#dbffd6"></div>
<div class="a" style="left:1099px;top:379px;width:199px;height:26px;background:#dbffd6"></div>
<div class="a" style="left:1299px;top:379px;width:199px;height:26px;background:#ceffcc"></div>
<div class="a" style="left:1499px;top:379px;width:1049px;height:26px;background:#ceffcc"></div>
<div class="a" style="left:699px;top:405px;width:1849px;height:1px;background:#fff linear-gradient(90deg,#a0a0a0 50%,transparent 50%);background-size:2px 1px"></div>
<div class="a" style="left:699px;top:406px;width:199px;height:26px;background:#dbffd6"></div>
<div class="a" style="left:899px;top:406px;width:199px;height:26px;background:#dbffd6"></div>
<div class="a" style="left:1099px;top:406px;width:199px;height:26px;background:#dbffd6"></div>
<div class="a" style="left:1299px;top:406px;width:199px;height:26px;background:#ceffcc"></div>
<div class="a" style="left:1499px;top:406px;width:1049px;height:26px;background:#ceffcc"></div>
<div class="a" style="left:699px;top:432px;width:1849px;height:1px;background:#fff linear-gradient(90deg,#a0a0a0 50%,transparent 50%);background-size:2px 1px"></div>
<div class="a" style="left:699px;top:433px;width:199px;height:26px;background:#dbffd6"></div>
<div class="a" style="left:899px;top:433px;width:199px;height:26px;background:#dbffd6"></div>
<div class="a" style="left:1099px;top:433px;width:199px;height:26px;background:#dbffd6"></div>
<div class="a" style="left:1299px;top:433px;width:199px;height:26px;background:#ceffcc"></div>
<div class="a" style="left:1499px;top:433px;width:1049px;height:26px;background:#ceffcc"></div>
<div class="a" style="left:699px;top:459px;width:1849px;height:1px;background:#fff linear-gradient(90deg,#a0a0a0 50%,transparent 50%);background-size:2px 1px"></div>
<div class="a" style="left:699px;top:460px;width:199px;height:26px;background:#dbffd6"></div>
<div class="a" style="left:899px;top:460px;width:199px;height:26px;background:#dbffd6"></div>
<div class="a" style="left:1099px;top:460px;width:199px;height:26px;background:#dbffd6"></div>
<div class="a" style="left:1299px;top:460px;width:199px;height:26px;background:#ceffcc"></div>
<div class="a" style="left:1499px;top:460px;width:1049px;height:26px;background:#ceffcc"></div>
<div class="rs" style="left:699px;top:486px;width:1849px"></div>
<div class="a" style="left:699px;top:487px;width:199px;height:26px;background:#dbffd6"></div>
<div class="a" style="left:899px;top:487px;width:199px;height:26px;background:#dbffd6"></div>
<div class="a" style="left:1099px;top:487px;width:199px;height:26px;background:#dbffd6"></div>
<div class="a" style="left:1299px;top:487px;width:199px;height:26px;background:#ceffcc"></div>
<div class="a" style="left:1499px;top:487px;width:1049px;height:26px;background:#ceffcc"></div>
<div class="rs" style="left:699px;top:513px;width:1849px"></div>
<div class="a" style="left:699px;top:514px;width:199px;height:26px;background:#dbffd6"></div>
<div class="a" style="left:899px;top:514px;width:199px;height:26px;background:#dbffd6"></div>
<div class="a" style="left:1099px;top:514px;width:199px;height:26px;background:#dbffd6"></div>
<div class="a" style="left:1299px;top:514px;width:199px;height:26px;background:#ceffcc"></div>
<div class="a" style="left:1499px;top:514px;width:1049px;height:26px;background:#ceffcc"></div>
<div class="rs" style="left:699px;top:540px;width:1849px"></div>
<div class="a" style="left:699px;top:541px;width:199px;height:26px;background:#dbffd6"></div>
<div class="a" style="left:899px;top:541px;width:199px;height:26px;background:#dbffd6"></div>
<div class="a" style="left:1099px;top:541px;width:199px;height:26px;background:#dbffd6"></div>
<div class="a" style="left:1299px;top:541px;width:199px;height:26px;background:#ceffcc"></div>
<div class="a" style="left:1499px;top:541px;width:1049px;height:26px;background:#ceffcc"></div>
<div class="a" style="left:699px;top:567px;width:1849px;height:1px;background:#fff linear-gradient(90deg,#a0a0a0 50%,transparent 50%);background-size:2px 1px"></div>
<div class="a" style="left:699px;top:568px;width:199px;height:26px;background:#effcec"></div>
<div class="a" style="left:899px;top:568px;width:199px;height:26px;background:#effcec"></div>
<div class="a" style="left:1099px;top:568px;width:199px;height:26px;background:#effcec"></div>
<div class="a" style="left:1299px;top:568px;width:199px;height:26px;background:#e4fde0"></div>
<div class="a" style="left:1499px;top:568px;width:1049px;height:26px;background:#e4fde0"></div>
<div class="ls" style="left:699px;top:594px;width:1849px"></div>
<div class="a" style="left:898px;top:136px;width:1px;height:459px;background:#fff linear-gradient(#a0a0a0 50%,transparent 50%);background-size:1px 2px"></div>
<div class="lv" style="left:898px;top:595px;height:655px"></div>
<div class="a" style="left:1098px;top:136px;width:1px;height:459px;background:#e9e9e9 linear-gradient(#fff 50%,transparent 50%);background-size:1px 2px"></div>
<div class="lv" style="left:1098px;top:595px;height:655px"></div>
<div class="a" style="left:1298px;top:136px;width:1px;height:459px;background:#e9e9e9 linear-gradient(#fff 50%,transparent 50%);background-size:1px 2px"></div>
<div class="lv" style="left:1298px;top:595px;height:655px"></div>
<div class="a" style="left:1498px;top:136px;width:1px;height:459px;background:#e9e9e9 linear-gradient(#fff 50%,transparent 50%);background-size:1px 2px"></div>
<div class="lv" style="left:1498px;top:595px;height:655px"></div>
<div class="vd" style="left:718px;top:155px;height:426px"></div>
<div class="vd" style="left:745px;top:163px;height:202px"></div>
<div class="vd" style="left:772px;top:244px;height:13px"></div>
<div class="vd" style="left:745px;top:487px;height:67px"></div>
<div class="pb " style="left:713px;top:142px"></div>
<div class="hd" style="left:726px;top:148px;width:12px"></div>
<div class="t" style="left:742px;top:140px;color:#ff0000">Record Header</div>
<div class="hd" style="left:745px;top:175px;width:20px"></div>
<div class="t" style="left:769px;top:167px;color:#800080">Signature</div>
<div class="t" style="left:914px;top:167px;color:#800080">STAT</div>
<div class="t" style="left:1114px;top:167px;color:#808080">STAT</div>
<div class="t" style="left:1314px;top:167px;color:#808080">STAT</div>
<div class="hd" style="left:745px;top:202px;width:20px"></div>
<div class="t" style="left:769px;top:194px;color:#000">Data Size</div>
<div class="t" style="left:914px;top:194px;color:#000">166</div>
<div class="t" style="left:1114px;top:194px;color:#000">178</div>
<div class="t" style="left:1314px;top:194px;color:#000">166</div>
<div class="pb " style="left:740px;top:223px"></div>
<div class="hd" style="left:753px;top:229px;width:12px"></div>
<div class="t" style="left:769px;top:221px;color:#ff0000">Record Flags (...</div>
<div class="t" style="left:1114px;top:221px;color:#ff0000">Has Distant LOD</div>
<div class="hd" style="left:772px;top:256px;width:20px"></div>
<div class="t" style="left:796px;top:248px;color:#ff0000">Has Distan...</div>
<div class="t" style="left:1114px;top:248px;color:#ff0000">Has Distant LOD</div>
<div class="hd" style="left:745px;top:283px;width:20px"></div>
<div class="t" style="left:769px;top:275px;color:#800080">FormID</div>
<div class="t" style="left:914px;top:275px;color:#800080">RockPileM01 [STAT:0...</div>
<div class="t" style="left:1114px;top:275px;color:#808080">RockPileM01 [STAT:0...</div>
<div class="t" style="left:1314px;top:275px;color:#808080">RockPileM01 [STAT:0...</div>
<div class="hd" style="left:745px;top:310px;width:20px"></div>
<div class="t" style="left:769px;top:302px;color:#000">Version Contr...</div>
<div class="t" style="left:914px;top:302px;color:#000">2011-07-19 User: 14...</div>
<div class="t" style="left:1114px;top:302px;color:#000">None</div>
<div class="t" style="left:1314px;top:302px;color:#000">None</div>
<div class="hd" style="left:745px;top:337px;width:20px"></div>
<div class="t" style="left:769px;top:329px;color:#000">Form Version</div>
<div class="t" style="left:914px;top:329px;color:#000">39</div>
<div class="t" style="left:1114px;top:329px;color:#000">44</div>
<div class="t" style="left:1314px;top:329px;color:#000">39</div>
<div class="hd" style="left:745px;top:364px;width:20px"></div>
<div class="t" style="left:769px;top:356px;color:#000">Version Contr...</div>
<div class="t" style="left:914px;top:356px;color:#000">04 00</div>
<div class="t" style="left:1114px;top:356px;color:#000">00 00</div>
<div class="t" style="left:1314px;top:356px;color:#000">00 00</div>
<div class="hd" style="left:718px;top:391px;width:20px"></div>
<div class="t" style="left:742px;top:383px;color:#800080">EDID - Editor ID</div>
<div class="t" style="left:914px;top:383px;color:#800080">RockPileM01</div>
<div class="t" style="left:1114px;top:383px;color:#808080">RockPileM01</div>
<div class="t" style="left:1314px;top:383px;color:#808080">RockPileM01</div>
<div class="pb p" style="left:713px;top:412px"></div>
<div class="hd" style="left:726px;top:418px;width:12px"></div>
<div class="t" style="left:742px;top:410px;color:#800080">OBND - Object B...</div>
<div class="t" style="left:914px;top:410px;color:#800080">(-268, -300, -41), (26...</div>
<div class="t" style="left:1114px;top:410px;color:#808080">(-268, -300, -41), (26...</div>
<div class="t" style="left:1314px;top:410px;color:#808080">(-268, -300, -41), (26...</div>
<div class="pb p" style="left:713px;top:439px"></div>
<div class="hd" style="left:726px;top:445px;width:12px"></div>
<div class="t" style="left:742px;top:437px;color:#800080">Model</div>
<div class="t" style="left:914px;top:437px;color:#800080">Landscape\Rocks\Ro...</div>
<div class="t" style="left:1114px;top:437px;color:#000">Landscape\Rocks\Ro...</div>
<div class="t" style="left:1314px;top:437px;color:#808080">Landscape\Rocks\Ro...</div>
<div class="pb " style="left:713px;top:466px"></div>
<div class="hd" style="left:726px;top:472px;width:12px"></div>
<div class="t" style="left:742px;top:464px;color:#800080">DNAM - Directio...</div>
<div class="hd" style="left:745px;top:499px;width:20px"></div>
<div class="t" style="left:769px;top:491px;color:#800080">Max Angle (3...</div>
<div class="t" style="left:914px;top:491px;color:#800080">90.000000</div>
<div class="t" style="left:1114px;top:491px;color:#808080">90.000000</div>
<div class="t" style="left:1314px;top:491px;color:#808080">90.000000</div>
<div class="hd" style="left:745px;top:526px;width:20px"></div>
<div class="t" style="left:769px;top:518px;color:#800080">Material</div>
<div class="t" style="left:914px;top:518px;color:#800080">NULL - Null Referenc...</div>
<div class="t" style="left:1114px;top:518px;color:#808080">NULL - Null Referenc...</div>
<div class="t" style="left:1314px;top:518px;color:#808080">NULL - Null Referenc...</div>
<div class="hd" style="left:745px;top:553px;width:20px"></div>
<div class="t" style="left:769px;top:545px;color:#808080">Considered S...</div>
<div class="t" style="left:1114px;top:545px;color:#808080">False</div>
<div class="hd" style="left:718px;top:580px;width:20px"></div>
<div class="t" style="left:742px;top:572px;color:#a8a8a8">MNAM - Distant ...</div>
<div class="a" style="left:694px;top:1256px;width:1858px;height:1px;background:#e3e3e3"></div>
<div class="a" style="left:770px;top:1258px;width:1783px;height:32px;background:#f0f0f0;border-top:1px solid #e8e8e8;border-bottom:1px solid #dedede;border-right:1px solid #dcdcdc"></div>
<div class="a" style="left:694px;top:1291px;width:1860px;height:1px;background:#fdfdfd"></div>
<div class="t" style="left:702px;top:1266px;">View</div>
<div class="t" style="left:774px;top:1264px;">Referenced By (104)</div>
<div class="t" style="left:942px;top:1264px;">Messages</div>
<div class="t" style="left:1032px;top:1264px;">Information</div>
<div class="t" style="left:1138px;top:1264px;">Weapon Spreadsheet</div>
<div class="t" style="left:1319px;top:1264px;">Armor Spreadsheet</div>
<div class="t" style="left:1485px;top:1264px;">Ammunition Spreadsheet</div>
<div class="t" style="left:1699px;top:1264px;">What&#x27;s New</div>
<div class="a" style="left:769px;top:1259px;width:1px;height:29px;background:#dedede"></div>
<div class="a" style="left:935px;top:1259px;width:1px;height:29px;background:#dedede"></div>
<div class="a" style="left:1025px;top:1259px;width:1px;height:29px;background:#dedede"></div>
<div class="a" style="left:1131px;top:1259px;width:1px;height:29px;background:#dedede"></div>
<div class="a" style="left:1312px;top:1259px;width:1px;height:29px;background:#dedede"></div>
<div class="a" style="left:1478px;top:1259px;width:1px;height:29px;background:#dedede"></div>
<div class="a" style="left:1692px;top:1259px;width:1px;height:29px;background:#dedede"></div>
<div class="a" style="left:1797px;top:1259px;width:1px;height:29px;background:#dedede"></div>
</body></html>
